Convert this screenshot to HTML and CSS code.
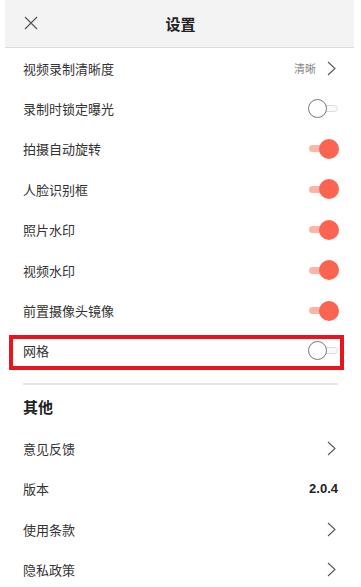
FILE: index.html
```html
<!DOCTYPE html>
<html lang="zh">
<head>
<meta charset="utf-8">
<link rel="stylesheet" href="styles.css">
</head>
<body>
<div class="page">
  <header class="header">
    <svg class="close" width="14" height="14" viewBox="0 0 14 14"><path d="M1 1L13 13M13 1L1 13" stroke="#555" stroke-width="1.2" fill="none"/></svg>
    <div class="title">设置</div>
  </header>
  <div class="list">
    <div class="row"><span class="label">视频录制清晰度</span><span class="right"><span class="value">清晰</span><svg class="chev" width="9" height="15" viewBox="0 0 9 15"><path d="M1 1L8 7.5L1 14" stroke="#555" stroke-width="1.1" fill="none"/></svg></span></div>
    <div class="row"><span class="label">录制时锁定曝光</span><span class="toggle off"><span class="track"></span><span class="knob"></span></span></div>
    <div class="row"><span class="label">拍摄自动旋转</span><span class="toggle on"><span class="track"></span><span class="knob"></span></span></div>
    <div class="row"><span class="label">人脸识别框</span><span class="toggle on"><span class="track"></span><span class="knob"></span></span></div>
    <div class="row"><span class="label">照片水印</span><span class="toggle on"><span class="track"></span><span class="knob"></span></span></div>
    <div class="row"><span class="label">视频水印</span><span class="toggle on"><span class="track"></span><span class="knob"></span></span></div>
    <div class="row"><span class="label">前置摄像头镜像</span><span class="toggle on"><span class="track"></span><span class="knob"></span></span></div>
    <div class="row highlight"><span class="label">网格</span><span class="toggle off"><span class="track"></span><span class="knob"></span></span></div>
  </div>
  <div class="divider"></div>
  <div class="section">其他</div>
  <div class="list">
    <div class="row"><span class="label">意见反馈</span><svg class="chev" width="9" height="15" viewBox="0 0 9 15"><path d="M1 1L8 7.5L1 14" stroke="#555" stroke-width="1.1" fill="none"/></svg></div>
    <div class="row"><span class="label">版本</span><span class="version">2.0.4</span></div>
    <div class="row"><span class="label">使用条款</span><svg class="chev" width="9" height="15" viewBox="0 0 9 15"><path d="M1 1L8 7.5L1 14" stroke="#555" stroke-width="1.1" fill="none"/></svg></div>
    <div class="row"><span class="label">隐私政策</span><svg class="chev" width="9" height="15" viewBox="0 0 9 15"><path d="M1 1L8 7.5L1 14" stroke="#555" stroke-width="1.1" fill="none"/></svg></div>
  </div>
</div>
</body>
</html>
```
FILE: styles.css
```css
html, body {
  margin: 0;
  padding: 0;
  background: #fff;
}
body {
  font-family: "Noto Sans CJK SC", "Noto Sans", sans-serif;
  color: #333;
  width: 361px;
  height: 587px;
  overflow: hidden;
}
.page {
  display: flex;
  flex-direction: column;
}
.header {
  margin: 0 7px 0 5px;
  height: 47px;
  background: #f3f3f3;
  border-bottom: 1px solid #dcdcdc;
  display: flex;
  align-items: center;
  justify-content: center;
  position: relative;
}
.close {
  position: absolute;
  left: 19px;
  top: 16px;
}
.title {
  font-size: 15px;
  font-weight: 700;
  color: #222;
  margin-left: 2px;
}
.list {
  display: flex;
  flex-direction: column;
}
.row {
  height: 40.4px;
  padding: 0 23px;
  display: flex;
  align-items: center;
  justify-content: space-between;
  position: relative;
}
.label {
  font-size: 13px;
  color: #333;
  letter-spacing: 0;
}
.right {
  display: flex;
  align-items: center;
  gap: 11px;
}
.value {
  font-size: 11px;
  color: #888;
}
.chev {
  display: block;
  margin-right: 2px;
}
.version {
  font-family: "Liberation Sans", Arial, sans-serif;
  font-weight: 700;
  font-size: 13px;
  color: #222;
}
.toggle {
  width: 30px;
  height: 22px;
  position: relative;
  display: block;
}
.toggle .track {
  position: absolute;
  top: 7.5px;
  height: 7px;
  border-radius: 4px;
}
.toggle .knob {
  position: absolute;
  top: 1px;
  border-radius: 50%;
  box-sizing: border-box;
}
.toggle.on .track {
  left: 1px;
  width: 22px;
  background: #fcb5a8;
}
.toggle.on .knob {
  left: 11px;
  width: 20px;
  height: 20px;
  background: #fa6450;
}
.toggle.off .track {
  left: 8px;
  width: 22px;
  background: #fafafa;
  border: 1px solid #dcdcdc;
  box-sizing: border-box;
}
.toggle.off .knob {
  left: 0;
  top: 1.5px;
  width: 19px;
  height: 19px;
  background: #fff;
  border: 1.5px solid #777;
}
.highlight::after {
  content: "";
  position: absolute;
  left: 9px;
  right: 17px;
  top: 4px;
  bottom: 1px;
  border: 4px solid #e8141e;
}
.divider {
  margin: 12px 23px 0;
  height: 2px;
  background: #e6e6e6;
}
.section {
  height: 43px;
  padding: 0 23px;
  display: flex;
  align-items: center;
  font-size: 15px;
  font-weight: 700;
  color: #222;
}
```
